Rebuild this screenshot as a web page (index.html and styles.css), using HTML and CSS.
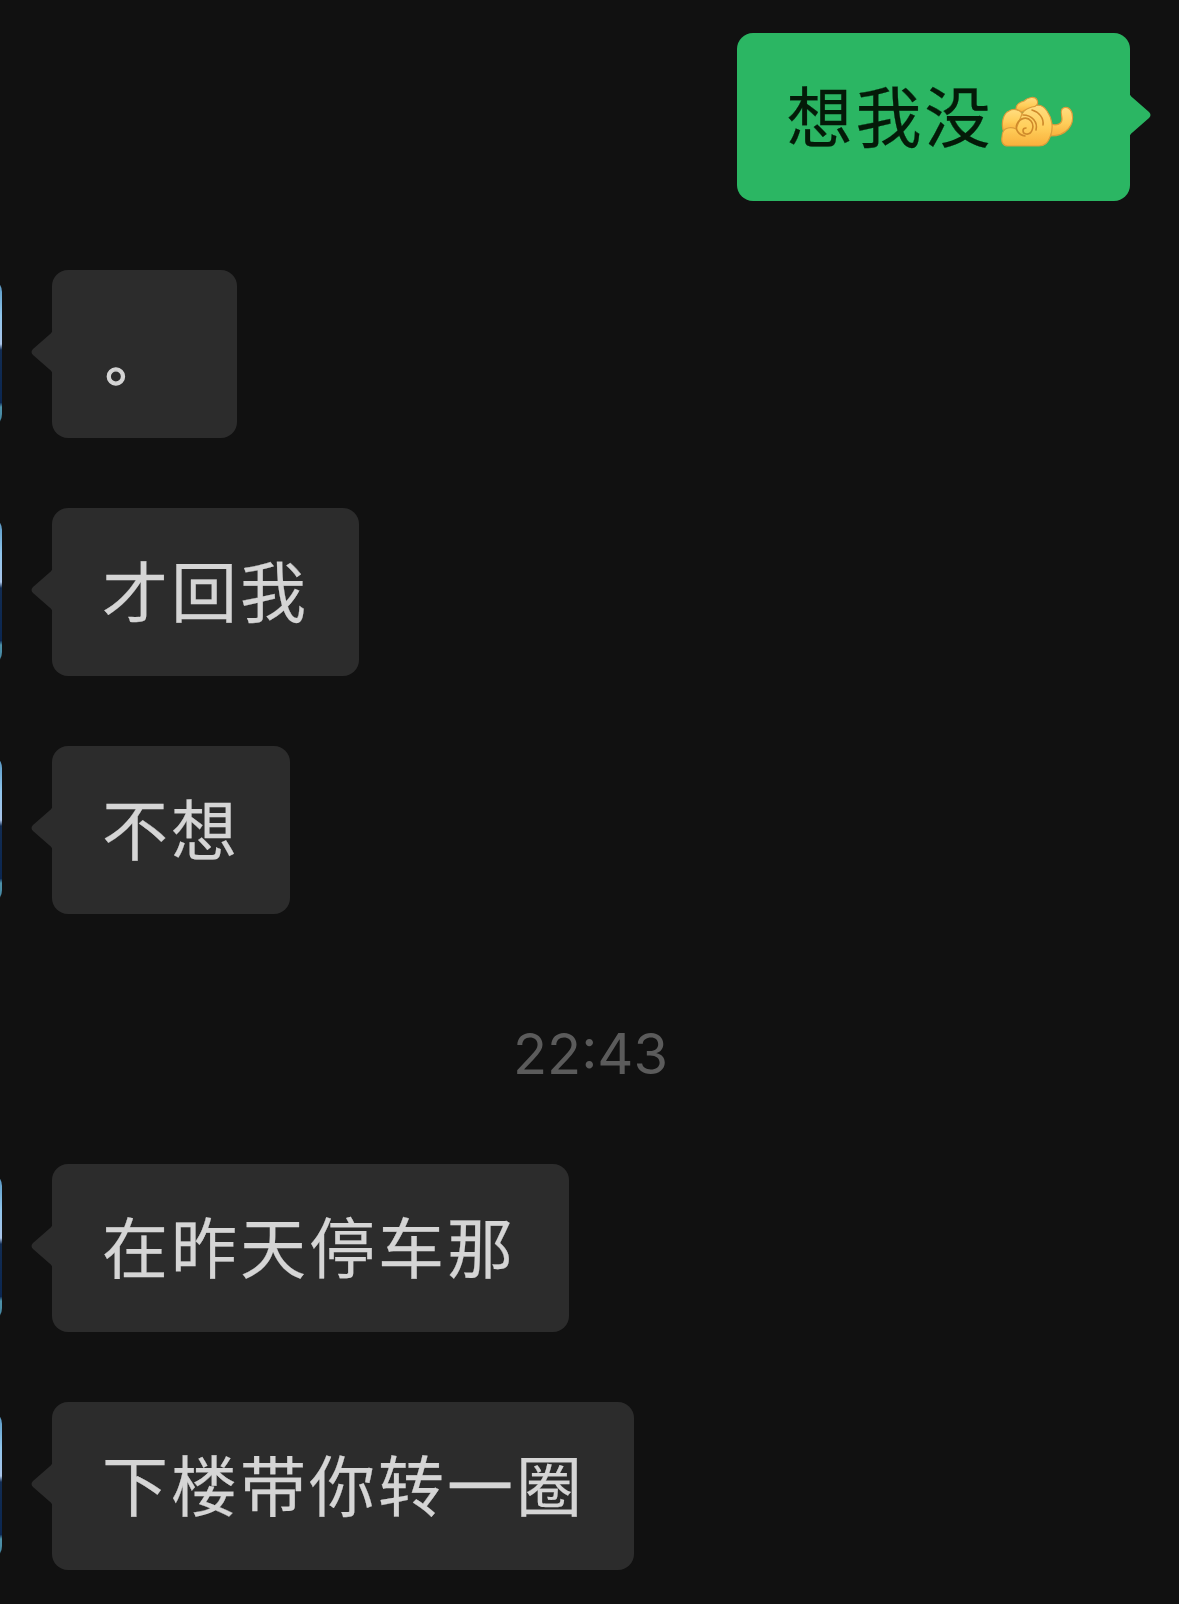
FILE: index.html
```html
<!DOCTYPE html>
<html lang="zh-CN">
<head>
<meta charset="utf-8">
<meta name="viewport" content="width=device-width, initial-scale=1">
<title>聊天</title>
<link rel="stylesheet" href="styles.css">
</head>
<body>
<main class="chat">
  <div class="message sent">
    <div class="bubble w-sent">
      <span>想我没</span>
      <svg class="emoji" viewBox="0 0 78 56" aria-hidden="true">
        <defs>
          <linearGradient id="skin" x1="0" y1="0" x2="0" y2="1">
            <stop offset="0" stop-color="#ffdd80"/>
            <stop offset=".55" stop-color="#ffce5a"/>
            <stop offset="1" stop-color="#f9b03c"/>
          </linearGradient>
        </defs>
        <g fill="url(#skin)" stroke="#dc9c3a" stroke-width="1.2" stroke-linejoin="round" stroke-linecap="round">
          <path d="M51 30C58 32 63 30 63 25C63 21 61 18 63 15C66 12 71 13 73 19C76 31 67 42 52 42Z"/>
          <path d="M4 36C2 27 5 19 10 17C13 15 17 15 21 17L25 22L18 37Z"/>
          <path d="M23 20C26 15 30 12 35 12C40 10 45 12 48 17C53 24 55 34 51 43C49 49 46 52 40 52H9C4 52 2 48 3 43C3 39 4 35 9 34C12 33 15 34 17 35Z"/>
          <path d="M17 15C17 10 21 8 25 7C29 3 36 2 38 6C40 10 37 13 33 13C29 14 26 16 23 18Z"/>
        </g>
        <g fill="none" stroke="#cf8a2b" stroke-width="1.6" stroke-linecap="round">
          <path d="M26 42C19 41 16 35 18 30C21 24 28 22 32 27C36 32 33 41 27 40C23 39 23 34 27 34"/>
          <path d="M24 21C33 21 39 28 37 36M33 16C40 18 45 24 44 31"/>
        </g>
      </svg>
      <svg class="tail" viewBox="0 0 22 48" aria-hidden="true"><path d="M0 0Q0 4 4 7L20 21Q23 24 20 27L4 41Q0 44 0 48Z"/></svg>
    </div>
  </div>

  <div class="message received">
    <div class="avatar"></div>
    <div class="bubble w-one"><span class="stop">。</span><svg class="tail" viewBox="0 0 22 48" aria-hidden="true"><path d="M0 0Q0 4 4 7L20 21Q23 24 20 27L4 41Q0 44 0 48Z"/></svg></div>
  </div>
  <div class="message received">
    <div class="avatar"></div>
    <div class="bubble w-three"><span>才回我</span><svg class="tail" viewBox="0 0 22 48" aria-hidden="true"><path d="M0 0Q0 4 4 7L20 21Q23 24 20 27L4 41Q0 44 0 48Z"/></svg></div>
  </div>
  <div class="message received">
    <div class="avatar"></div>
    <div class="bubble w-two"><span>不想</span><svg class="tail" viewBox="0 0 22 48" aria-hidden="true"><path d="M0 0Q0 4 4 7L20 21Q23 24 20 27L4 41Q0 44 0 48Z"/></svg></div>
  </div>

  <time class="timestamp">22:43</time>

  <div class="message received">
    <div class="avatar"></div>
    <div class="bubble w-six"><span>在昨天停车那</span><svg class="tail" viewBox="0 0 22 48" aria-hidden="true"><path d="M0 0Q0 4 4 7L20 21Q23 24 20 27L4 41Q0 44 0 48Z"/></svg></div>
  </div>
  <div class="message received">
    <div class="avatar"></div>
    <div class="bubble w-seven"><span>下楼带你转一圈</span><svg class="tail" viewBox="0 0 22 48" aria-hidden="true"><path d="M0 0Q0 4 4 7L20 21Q23 24 20 27L4 41Q0 44 0 48Z"/></svg></div>
  </div>
</main>
</body>
</html>
```
FILE: styles.css
```css
* {
  box-sizing: border-box;
}

body {
  margin: 0;
  background: #111111;
  overflow: hidden;
}

.chat {
  display: flex;
  flex-direction: column;
  gap: 69.7px;
  height: 1604px;
  padding-top: 32.5px;
  overflow: hidden;
  font-family: "Noto Sans CJK SC", sans-serif;
}

.message {
  display: flex;
  flex: none;
  height: 168px;
}

.sent {
  justify-content: flex-end;
  padding-right: 49px;
}

.received {
  gap: 50px;
}

.avatar {
  flex: none;
  width: 148px;
  height: 150px;
  margin: 8px 0 0 -146px;
  border-radius: 14px;
  background: linear-gradient(#4f90bd 0, #8fc5ec 25%, #a9c4e8 44%, #122c52 48%, #0b2752 83%, #4d91a8 86%, #4384a3 100%);
}

.bubble {
  position: relative;
  display: flex;
  align-items: center;
  height: 168px;
  padding: 0 0 7px 50px;
  border-radius: 16px;
  background: #2c2c2c;
  color: #d5d5d5;
  font-size: 66px;
  line-height: 96px;
  letter-spacing: 3px;
  white-space: nowrap;
  -webkit-text-stroke: 0.25px currentColor;
}

.sent .bubble {
  background: #2bb663;
  color: #041a08;
}

.w-sent { width: 393.5px; }
.w-one { width: 184.5px; }
.w-two { width: 237.5px; }
.w-three { width: 307px; }
.w-six { width: 516.5px; }
.w-seven { width: 581.5px; }

.stop {
  padding: 13px 0 0 3px;
  font-size: 56px;
  -webkit-text-stroke: 1.4px currentColor;
}

.tail {
  position: absolute;
  top: 58px;
  width: 22px;
  height: 48px;
  fill: #2c2c2c;
}

.received .tail {
  right: calc(100% - 1px);
  transform: scaleX(-1);
}

.sent .tail {
  left: calc(100% - 1px);
  fill: #2bb663;
}

.emoji {
  flex: none;
  width: 78px;
  height: 56px;
  margin: 17px 0 0 5px;
}

.timestamp {
  flex: none;
  height: 111px;
  padding: 36px 0 0 2px;
  color: #5b5b5b;
  font-family: Inter, "Liberation Sans", sans-serif;
  font-size: 56px;
  line-height: 70px;
  text-align: center;
}
```
